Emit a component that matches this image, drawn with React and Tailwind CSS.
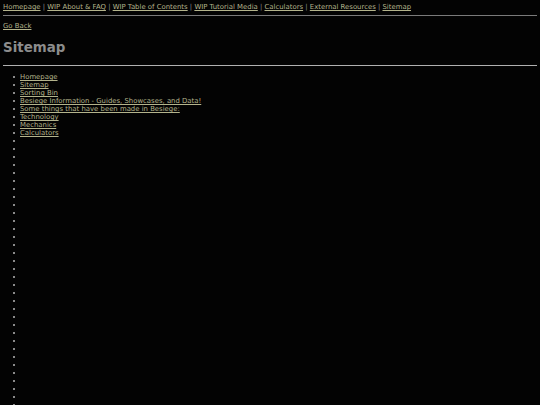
const navLinks = [
  "Homepage",
  "WIP About & FAQ",
  "WIP Table of Contents",
  "WIP Tutorial Media",
  "Calculators",
  "External Resources",
  "Sitemap",
];

const pages = [
  "Homepage",
  "Sitemap",
  "Sorting Bin",
  "Besiege Information - Guides, Showcases, and Data!",
  "Some things that have been made in Besiege:",
  "Technology",
  "Mechanics",
  "Calculators",
];

// the sitemap keeps going with empty entries
const items = [...pages, ...Array(36).fill("")];

export default function App() {
  return (
    <div
      className="min-h-screen bg-[#030303] px-[3px] pt-[3px] text-[6.9px] leading-[8px] text-[#8a8a8a] overflow-hidden"
      style={{ fontFamily: '"DejaVu Sans", sans-serif' }}
    >
      <div className="h-[8px] whitespace-nowrap">
        {navLinks.map((link, i) => (
          <span key={link}>
            {i > 0 && <span className="text-[#8a8a8a]"> | </span>}
            <a href="#" className="text-[#b4b48c] underline">
              {link}
            </a>
          </span>
        ))}
      </div>
      <div className="mt-[4px] border-t border-[#7a7a7a]" />

      <div className="mt-[6px] h-[8px]">
        <a href="#" className="text-[#b4b48c] underline">
          Go Back
        </a>
      </div>

      <h1 className="mt-[10px] text-[13.4px] leading-[16px] font-bold text-[#8c8c8c]">Sitemap</h1>
      <div className="mt-[9px] border-t border-[#b0b0b0]" />

      <ul className="mt-[7px]">
        {items.map((text, i) => (
          <li key={i} className="flex items-center h-[8px]">
            <span className="ml-[10px] w-[2px] h-[2px] bg-[#8a8a8a]" />
            <a href="#" className="ml-[5px] text-[#b4b48c] underline whitespace-nowrap">
              {text}
            </a>
          </li>
        ))}
      </ul>
    </div>
  );
}
